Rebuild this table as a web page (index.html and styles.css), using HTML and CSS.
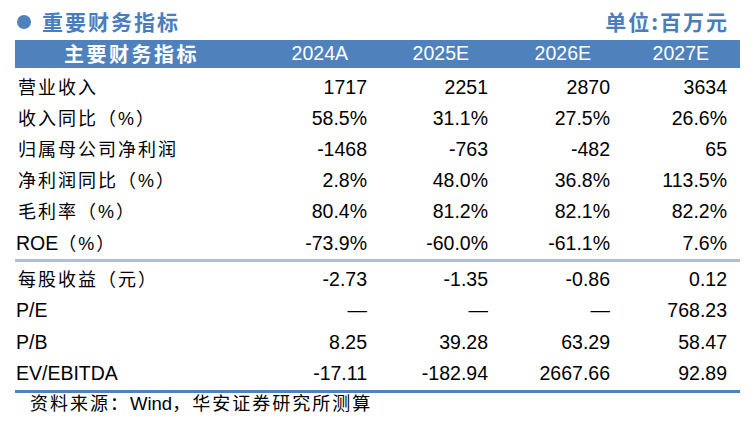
FILE: index.html
```html
<!DOCTYPE html>
<html lang="zh-CN">
<head>
<meta charset="utf-8">
<title>重要财务指标</title>
<link rel="stylesheet" href="styles.css">
</head>
<body>
<div class="page">
  <div class="title-row">
    <div class="title"><span class="dot"></span><span class="title-text">重要财务指标</span></div>
    <div class="unit">单位:百万元</div>
  </div>
  <div class="head row">
    <div class="label-head">主要财务指标</div>
    <div class="num">2024A</div>
    <div class="num">2025E</div>
    <div class="num">2026E</div>
    <div class="num">2027E</div>
  </div>
  <div class="section first">
    <div class="row"><div class="label">营业收入</div><div class="num">1717</div><div class="num">2251</div><div class="num">2870</div><div class="num">3634</div></div>
    <div class="row"><div class="label">收入同比（%）</div><div class="num">58.5%</div><div class="num">31.1%</div><div class="num">27.5%</div><div class="num">26.6%</div></div>
    <div class="row"><div class="label">归属母公司净利润</div><div class="num">-1468</div><div class="num">-763</div><div class="num">-482</div><div class="num">65</div></div>
    <div class="row"><div class="label">净利润同比（%）</div><div class="num">2.8%</div><div class="num">48.0%</div><div class="num">36.8%</div><div class="num">113.5%</div></div>
    <div class="row"><div class="label">毛利率（%）</div><div class="num">80.4%</div><div class="num">81.2%</div><div class="num">82.1%</div><div class="num">82.2%</div></div>
    <div class="row"><div class="label"><span class="lat">ROE</span>（%）</div><div class="num">-73.9%</div><div class="num">-60.0%</div><div class="num">-61.1%</div><div class="num">7.6%</div></div>
  </div>
  <div class="section second">
    <div class="row"><div class="label">每股收益（元）</div><div class="num">-2.73</div><div class="num">-1.35</div><div class="num">-0.86</div><div class="num">0.12</div></div>
    <div class="row"><div class="label"><span class="lat">P/E</span></div><div class="num">—</div><div class="num">—</div><div class="num">—</div><div class="num">768.23</div></div>
    <div class="row"><div class="label"><span class="lat">P/B</span></div><div class="num">8.25</div><div class="num">39.28</div><div class="num">63.29</div><div class="num">58.47</div></div>
    <div class="row"><div class="label"><span class="lat">EV/EBITDA</span></div><div class="num">-17.11</div><div class="num">-182.94</div><div class="num">2667.66</div><div class="num">92.89</div></div>
  </div>
  <div class="source">资料来源：<span class="lat-src">Wind</span>，华安证券研究所测算</div>
</div>
</body>
</html>
```

FILE: styles.css
```css
html, body {
  margin: 0;
  padding: 0;
  background: #ffffff;
}

.page {
  width: 725px;
  margin-left: 15px;
  font-family: "Liberation Sans", "Noto Sans CJK SC", sans-serif;
  color: #000000;
}

.title-row {
  height: 40px;
  display: flex;
  align-items: center;
  justify-content: space-between;
  padding-top: 3px;
  box-sizing: border-box;
  color: #4a7dbc;
  font-family: "Noto Sans CJK SC", sans-serif;
  font-weight: 700;
}

.title {
  display: flex;
  align-items: center;
}

.dot {
  width: 14px;
  height: 14px;
  border-radius: 50%;
  background: #4f81bd;
  margin-left: 2px;
  margin-right: 11px;
}

.title-text {
  font-size: 21px;
  letter-spacing: 2px;
  line-height: 1;
}

.unit {
  font-size: 21px;
  letter-spacing: 2px;
  line-height: 1;
  margin-right: 11px;
}

.row {
  display: grid;
  grid-template-columns: 231px 121px 121px 122px 130px;
  align-items: center;
}

.head {
  height: 28px;
  background: #4f81bd;
  color: #ffffff;
}

.label-head {
  text-align: center;
  font-family: "Noto Sans CJK SC", sans-serif;
  font-weight: 700;
  font-size: 20px;
  letter-spacing: 2.5px;
  line-height: 1;
  padding-left: 2px;
}

.head .num {
  padding-right: 19px;
  font-size: 19.5px;
}

.head .num:last-child {
  padding-right: 31px;
}

.num {
  text-align: right;
  font-size: 19.5px;
  line-height: 1;
}

.num:last-child {
  padding-right: 13px;
}

.label {
  padding-left: 3px;
  font-size: 18px;
  letter-spacing: 2px;
  line-height: 1;
  white-space: nowrap;
}

.lat {
  font-size: 19.5px;
  letter-spacing: 0;
  margin-left: -2px;
}

.lat-src {
  letter-spacing: 0;
  font-size: 18.5px;
}

.section.first {
  padding-top: 4px;
  border-bottom: 3px solid #b0bdd6;
}

.section.first .row {
  height: 31.17px;
}

.section.second {
  padding-top: 2px;
  border-bottom: 3px solid #4f81bd;
}

.section.second .row {
  height: 31.5px;
}

.source {
  height: 22px;
  line-height: 22px;
  padding-left: 15px;
  font-size: 18px;
  letter-spacing: 2px;
  white-space: nowrap;
}
```
